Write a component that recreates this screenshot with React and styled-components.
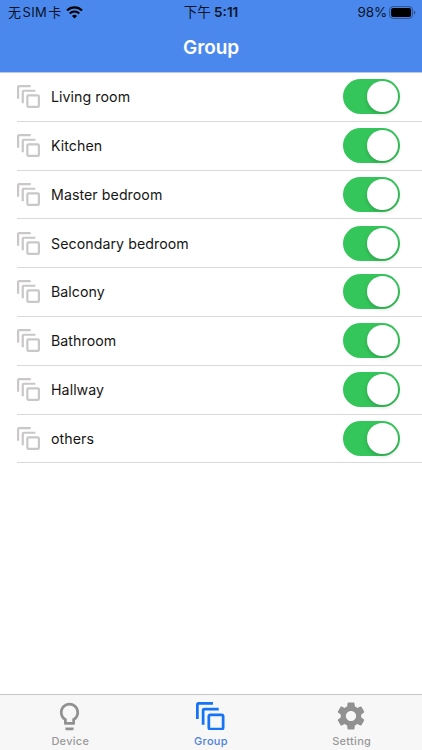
import { useState } from "react";
import styled, { createGlobalStyle } from "styled-components";
import { MdLightbulbOutline, MdSettings } from "react-icons/md";

const GlobalStyle = createGlobalStyle`
    * {
        box-sizing: border-box;
    }

    body {
        margin: 0;
        background: #fff;
        font-family: "Inter", "Noto Sans CJK SC", sans-serif;
    }
`;

const Screen = styled.div`
    display: flex;
    flex-direction: column;
    width: 422px;
    height: 750px;
    background: #fff;
    overflow: hidden;
`;

const Header = styled.header`
    flex: none;
    height: 73px;
    border-bottom: 1px solid #b9c8e4;
    background: #4a88ee;
`;

const StatusBar = styled.div`
    display: grid;
    grid-template-columns: 1fr auto 1fr;
    align-items: center;
    height: 24px;
    padding: 0 6px 0 8px;
    color: #0a1424;
    font-size: 13.5px;
    line-height: 24px;
    white-space: nowrap;
`;

const StatusGroup = styled.div`
    display: flex;
    align-items: center;
    justify-content: ${props => props.$end ? "flex-end" : "flex-start"};
    gap: ${props => props.$end ? "2px" : "5px"};
`;

const Carrier = styled.span`
    display: flex;
    gap: 1.2px;
    font-size: 13px;
    letter-spacing: 0.3px;
`;

const Percent = styled.span`
    font-size: 13.5px;
    letter-spacing: -0.2px;
`;

const Clock = styled.span`
    margin-right: 2px;
    font-size: 13.5px;
    font-weight: 600;
`;

const Meridiem = styled.span`
    font-size: 13.5px;
    font-weight: 400;
`;

const Title = styled.h1`
    margin: 0;
    color: #fff;
    font-size: 19px;
    font-weight: 600;
    letter-spacing: -0.1px;
    line-height: 48px;
    text-align: center;
`;

const List = styled.ul`
    flex: 1;
    margin: 0;
    padding: 0 0 0 17px;
    list-style: none;
`;

const Row = styled.li`
    display: flex;
    align-items: center;
    height: 48.8px;
    padding: 0 22px 0.4px 0;
    border-bottom: 1px solid #d9d9d9;
    color: #161616;
`;

const RowLabel = styled.span`
    flex: 1;
    margin-left: 11px;
    font-size: 14.2px;
    letter-spacing: 0.06px;
    line-height: 18px;
    padding-top: 1px;
`;

const Toggle = styled.button`
    display: flex;
    justify-content: ${props => props.$on ? "flex-end" : "flex-start"};
    width: 57px;
    height: 35px;
    padding: 2px;
    border: 0;
    border-radius: 18px;
    background: ${props => props.$on ? "#35c65b" : "#e9e9eb"};
    cursor: pointer;
`;

const Knob = styled.span`
    width: 31px;
    height: 31px;
    border-radius: 50%;
    background: #fff;
    box-shadow: 0 2px 4px rgba(0, 0, 0, 0.18);
`;

const TabBar = styled.nav`
    display: grid;
    flex: none;
    grid-template-columns: repeat(3, 1fr);
    height: 56px;
    border-top: 1px solid #c6c6c6;
    background: #f7f7f7;
`;

const Tab = styled.button`
    display: flex;
    flex-direction: column;
    align-items: center;
    padding: 4px 0 0;
    border: 0;
    background: none;
    color: ${props => props.$active ? "#4c82dc" : "#999"};
    font-family: inherit;
    font-size: 11px;
    font-weight: 500;
    letter-spacing: 0.3px;
    line-height: 16px;
    cursor: pointer;
`;

const TabIcon = styled.span`
    display: flex;
    align-items: center;
    justify-content: center;
    height: 34px;
    margin-right: 1px;
    color: ${props => props.$active ? "#1673f5" : "#919191"};
`;

const StackIcon = ({ size, color = "currentColor" }) => (
    <svg width={size} height={size} viewBox="0 0 24 24" fill="none" stroke={color} strokeWidth="2.3">
        <path d="M1.15 14.3V2.15a1 1 0 0 1 1-1h12.15" />
        <path d="M6 19.15V7a1 1 0 0 1 1-1h12.15" />
        <rect x="10.8" y="10.8" width="12.05" height="12.05" rx="1.3" />
    </svg>
);

const WifiIcon = () => (
    <svg width="17" height="13" viewBox="0 0 17 13" fill="none" stroke="#000">
        <path d="M1 4.5a10.8 10.8 0 0 1 15 0" strokeWidth="2.2" />
        <path d="M3.7 7.4a6.9 6.9 0 0 1 9.6 0" strokeWidth="2.1" />
        <path d="M8.5 12.6 6 10a3.6 3.6 0 0 1 5 0z" fill="#000" stroke="none" />
    </svg>
);

const BatteryIcon = () => (
    <svg width="27" height="13" viewBox="0 0 27 13">
        <rect x="0.6" y="0.6" width="23" height="11.8" rx="3.5" fill="none" stroke="#2d5289" strokeWidth="1" />
        <rect x="2.1" y="2.1" width="20" height="8.8" rx="2" fill="#000" />
        <path d="M25 4.4c1.9.7 1.9 3.5 0 4.2z" fill="#2d5289" />
    </svg>
);

const rooms = [
    "Living room",
    "Kitchen",
    "Master bedroom",
    "Secondary bedroom",
    "Balcony",
    "Bathroom",
    "Hallway",
    "others"
];

const tabs = [
    ["Device", <MdLightbulbOutline size={33} />],
    ["Group", <StackIcon size={28.5} />],
    ["Setting", <MdSettings size={34} />]
];

const App = () => {

    const [enabled, setEnabled] = useState(rooms.map(() => true));
    const [currentTab, setCurrentTab] = useState("Group");

    const toggleRoom = (index) => {
        setEnabled(enabled.map((on, i) => i === index ? !on : on));
    };

    return (
        <Screen>
            <GlobalStyle />
            <Header>
                <StatusBar>
                    <StatusGroup>
                        <Carrier>
                            <span>无</span>
                            <span>SIM</span>
                            <span>卡</span>
                        </Carrier>
                        <WifiIcon />
                    </StatusGroup>
                    <Clock><Meridiem>下午</Meridiem> 5:11</Clock>
                    <StatusGroup $end>
                        <Percent>98%</Percent>
                        <BatteryIcon />
                    </StatusGroup>
                </StatusBar>
                <Title>Group</Title>
            </Header>
            <List>
                { rooms.map((room, index) => (
                    <Row key={room}>
                        <StackIcon size={23} color="#c9c7c7" />
                        <RowLabel>{ room }</RowLabel>
                        <Toggle
                            $on={enabled[index]}
                            role="switch"
                            aria-checked={enabled[index]}
                            aria-label={room}
                            onClick={() => toggleRoom(index)}>
                            <Knob />
                        </Toggle>
                    </Row>
                ))}
            </List>
            <TabBar>
                { tabs.map(([name, icon]) => (
                    <Tab key={name} $active={currentTab === name} onClick={() => setCurrentTab(name)}>
                        <TabIcon $active={currentTab === name}>{ icon }</TabIcon>
                        { name }
                    </Tab>
                ))}
            </TabBar>
        </Screen>
    );
}

export default App;
